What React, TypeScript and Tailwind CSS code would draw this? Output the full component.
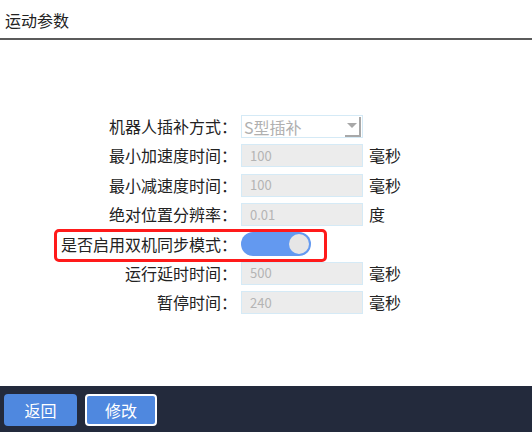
import React from "react";

type Row = {
  label: string;
  value: string;
  unit?: string;
};

const topRows: Row[] = [
  { label: "最小加速度时间：", value: "100", unit: "毫秒" },
  { label: "最小减速度时间：", value: "100", unit: "毫秒" },
  { label: "绝对位置分辨率：", value: "0.01", unit: "度" },
];

const bottomRows: Row[] = [
  { label: "运行延时时间：", value: "500", unit: "毫秒" },
  { label: "暂停时间：", value: "240", unit: "毫秒" },
];

function FieldRow({ label, value, unit }: Row) {
  return (
    <div className="flex h-[29.33px] items-start">
      <span className="w-[237px] text-right text-[16px] leading-[23px] text-[#222]">{label}</span>
      <div className="ml-[4px] flex h-[23px] w-[122px] items-center border border-[#d5eaf6] bg-[#ececec] pl-[8px] text-[13px] text-[#b4b4b4]">
        {value}
      </div>
      {unit && <span className="ml-[6px] text-[16px] leading-[23px] text-[#222]">{unit}</span>}
    </div>
  );
}

export default function App() {
  const [dual, setDual] = React.useState(true);

  return (
    <div
      className="flex h-[432px] w-[532px] flex-col bg-white"
      style={{ fontFamily: '"Noto Sans CJK SC", "Noto Sans", sans-serif' }}
    >
      <header className="h-[40px] border-b-2 border-[#5b5b5b] pl-[5px] pt-[8px]">
        <h1 className="text-[16px] leading-6 text-[#222]">运动参数</h1>
      </header>

      <main className="flex-1 pt-[75px]">
        <div className="flex h-[29.33px] items-start">
          <span className="w-[237px] text-right text-[16px] leading-[23px] text-[#222]">机器人插补方式：</span>
          <div className="relative ml-[4px] flex h-[23px] w-[122px] items-center border border-[#d5eaf6] bg-white pl-[2px] text-[16px] text-[#b0b0b0]">
            S型插补
            <div className="absolute right-[1px] top-[1px] flex h-[20px] w-[16px] items-center justify-center border-b-2 border-r-2 border-[#a8a8a8]">
              <span className="mb-[2px] h-0 w-0 border-l-[5px] border-r-[5px] border-t-[5px] border-l-transparent border-r-transparent border-t-[#a8a8a8]" />
            </div>
          </div>
        </div>

        {topRows.map((r) => (
          <FieldRow key={r.label} {...r} />
        ))}

        <div className="relative flex h-[29.33px] items-start">
          <div className="pointer-events-none absolute left-[54px] top-[-3px] h-[33px] w-[273px] rounded-[5px] border-[3px] border-[#ff1a1a]" />
          <span className="w-[237px] text-right text-[16px] leading-[24px] text-[#222]">是否启用双机同步模式：</span>
          <button
            onClick={() => setDual(!dual)}
            className={`ml-[4px] flex h-[24px] w-[70px] items-center rounded-full px-[2px] ${
              dual ? "justify-end bg-[#6399f0]" : "justify-start bg-[#cfcfcf]"
            }`}
          >
            <span className="h-[20px] w-[20px] rounded-full bg-[#e6e6e6]" />
          </button>
        </div>

        {bottomRows.map((r) => (
          <FieldRow key={r.label} {...r} />
        ))}
      </main>

      <footer className="flex h-[46px] items-start gap-[8px] bg-[#232a3c] pl-[4px] pt-[8px]">
        <button className="flex h-[32px] w-[73px] items-center justify-center rounded-[4px] bg-[#4f88df] text-[16px] text-white">
          返回
        </button>
        <button className="flex h-[32px] w-[72px] items-center justify-center rounded-[4px] border-2 border-white bg-[#4f88df] text-[16px] text-white">
          修改
        </button>
      </footer>
    </div>
  );
}
